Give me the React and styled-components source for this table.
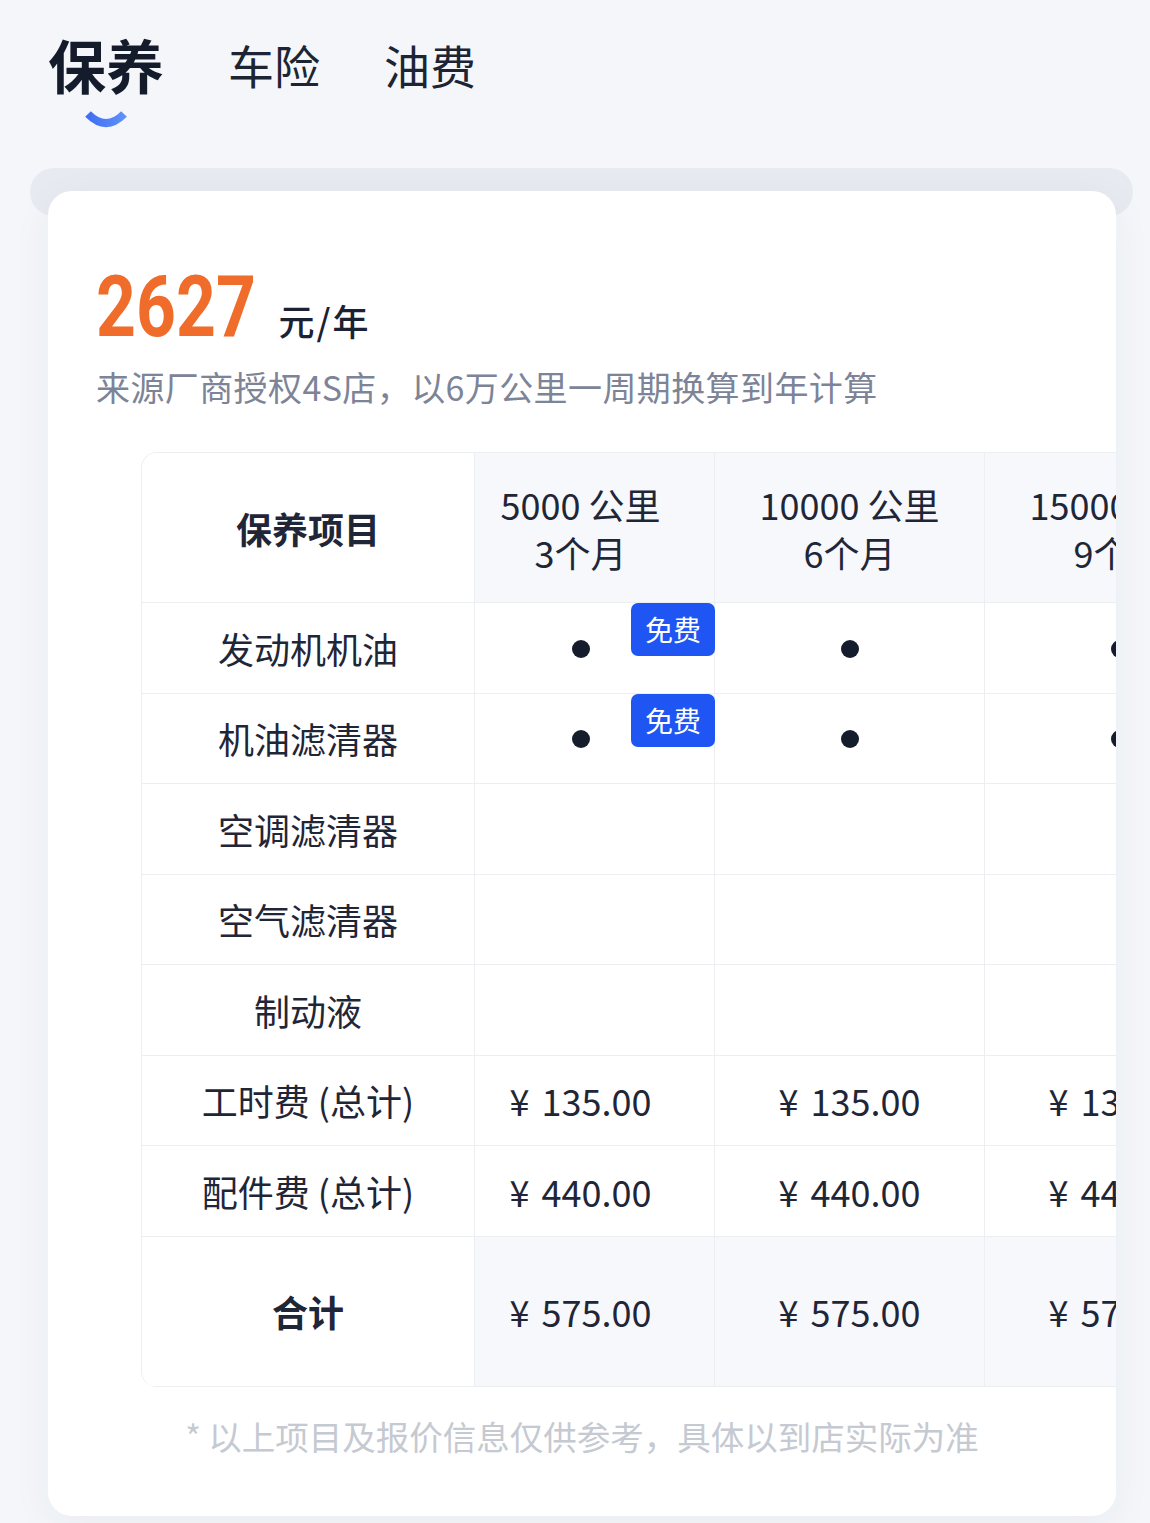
// Section : Maintenance cost card
// Style : tabs on top, yearly price and a schedule table below

import styled, { createGlobalStyle } from "styled-components";

const columns = [
    { km: "5000 公里", months: "3个月", labour: "135.00", parts: "440.00", total: "575.00", first: true },
    { km: "10000 公里", months: "6个月", labour: "135.00", parts: "440.00", total: "575.00" },
    { km: "15000 公里", months: "9个月", labour: "135.00", parts: "440.00", total: "575.00" },
];

// true = item is done at that interval
const items = [
    { name: "发动机机油", marks: [true, true, true], free: true },
    { name: "机油滤清器", marks: [true, true, true], free: true },
    { name: "空调滤清器", marks: [false, false, false] },
    { name: "空气滤清器", marks: [false, false, false] },
    { name: "制动液", marks: [false, false, false] },
];

const Money = ({ value }) => (
    <>
        <Yen>¥</Yen>
        {value}
    </>
);

const App = () => {
    return (
        <>
            <GlobalStyle />
            <Page>
                <TabBar>
                    <Tab $active>
                        <TabLabel $active>保养</TabLabel>
                        <Indicator width="44" height="18" viewBox="0 0 44 18">
                            <defs>
                                <linearGradient id="ind" x1="0" x2="1" y1="0" y2="0">
                                    <stop offset="0" stopColor="#3f6ff2" />
                                    <stop offset="1" stopColor="#5f90fa" />
                                </linearGradient>
                            </defs>
                            <path d="M4 4 Q22 22 40 4" fill="none" stroke="url(#ind)" strokeWidth="8" />
                        </Indicator>
                    </Tab>
                    <Tab>
                        <TabLabel>车险</TabLabel>
                    </Tab>
                    <Tab>
                        <TabLabel>油费</TabLabel>
                    </Tab>
                </TabBar>

                <Ledge />
                <Card>
                    <Summary>
                        <PriceLine>
                            <Price>2627</Price>
                            <Unit>元/年</Unit>
                        </PriceLine>
                        <Source>来源厂商授权4S店，以6万公里一周期换算到年计算</Source>
                    </Summary>

                    <Table>
                        <HeadCell $first>保养项目</HeadCell>
                        {columns.map((c) => (
                            <HeadCell key={c.km} $shade $narrow={c.first}>
                                <span>{c.km}</span>
                                <span>{c.months}</span>
                            </HeadCell>
                        ))}

                        {items.map((it) => (
                            <Row key={it.name} item={it} />
                        ))}

                        <LabelCell>工时费 (总计)</LabelCell>
                        {columns.map((c) => (
                            <ValueCell key={c.km} $narrow={c.first}>
                                <Money value={c.labour} />
                            </ValueCell>
                        ))}
                        <LabelCell>配件费 (总计)</LabelCell>
                        {columns.map((c) => (
                            <ValueCell key={c.km} $narrow={c.first}>
                                <Money value={c.parts} />
                            </ValueCell>
                        ))}

                        <TotalLabel>合计</TotalLabel>
                        {columns.map((c) => (
                            <TotalCell key={c.km} $narrow={c.first}>
                                <Money value={c.total} />
                            </TotalCell>
                        ))}
                    </Table>

                    <Note>* 以上项目及报价信息仅供参考，具体以到店实际为准</Note>
                </Card>
            </Page>
        </>
    );
};
export default App;

const Row = ({ item }) => (
    <>
        <LabelCell>{item.name}</LabelCell>
        {item.marks.map((on, i) => (
            <ValueCell key={i} $narrow={i === 0}>
                {on && <Dot />}
                {item.free && i === 0 && <Badge>免费</Badge>}
            </ValueCell>
        ))}
    </>
);

const GlobalStyle = createGlobalStyle`
    body {
        margin: 0;
        background: #f4f6f9;
        font-family: "Noto Sans CJK SC", "Noto Sans", sans-serif;
        color: #1c2333;
    }
`;

const Page = styled.div`
    width: 1150px;
    height: 1523px;
    overflow: hidden;
    padding-top: 24px;
    box-sizing: border-box;
`;

const TabBar = styled.div`
    display: flex;
    align-items: flex-start;
    gap: 64px;
    padding-left: 48px;
`;

const Tab = styled.div`
    display: flex;
    flex-direction: column;
    align-items: center;
`;

const TabLabel = styled.div`
    height: 80px;
    line-height: 80px;
    font-size: ${(p) => (p.$active ? "58px" : "46px")};
    font-weight: ${(p) => (p.$active ? 700 : 400)};
    color: ${(p) => (p.$active ? "#141b2b" : "#1d2535")};
`;

const Indicator = styled.svg`
    display: block;
    margin-top: 6px;
`;

const Ledge = styled.div`
    height: 48px;
    margin: 40px 17px 0 30px;
    border-radius: 24px;
    background: #e7eaf0;
`;

const Card = styled.div`
    position: relative;
    margin: -25px 34px 0 48px;
    background: #ffffff;
    border-radius: 24px;
    overflow: hidden;
    box-shadow: 0 10px 40px rgba(30, 50, 90, 0.05);
    padding-bottom: 56px;
`;

const Summary = styled.div`
    padding: 73px 0 0 48px;
`;

const PriceLine = styled.div`
    display: flex;
    align-items: baseline;
`;

// narrow DIN-like digits: Roboto squeezed sideways
const Price = styled.span`
    display: inline-block;
    font-family: Roboto, "Liberation Sans", sans-serif;
    font-weight: 700;
    font-size: 86px;
    line-height: 86px;
    color: #ef6c2b;
    transform: scaleX(0.81);
    transform-origin: left center;
    margin-right: -37px;
`;

const Unit = styled.span`
    margin-left: 22px;
    font-size: 36px;
    font-weight: 500;
    letter-spacing: 2px;
    color: #1a2233;
`;

const Source = styled.div`
    margin-top: 13px;
    font-size: 34px;
    letter-spacing: 0.4px;
    line-height: 48px;
    color: #7d8497;
`;

const Table = styled.div`
    display: grid;
    grid-template-columns: 333px 240px 270px 270px;
    grid-template-rows: 150px repeat(7, 90.5px) 150px;
    width: max-content;
    margin: 41px 0 0 93px;
    border-top: 1px solid #eceef2;
    border-left: 1px solid #eceef2;
    border-radius: 16px 0 0 16px;
    overflow: hidden;
`;

const Cell = styled.div`
    position: relative;
    display: flex;
    align-items: center;
    justify-content: center;
    box-sizing: border-box;
    border-right: 1px solid #eceef2;
    border-bottom: 1px solid #eceef2;
    padding-right: ${(p) => (p.$narrow ? "28px" : "0")};
    font-size: 36px;
    color: #1f2637;
`;

const HeadCell = styled(Cell)`
    flex-direction: column;
    line-height: 48px;
    font-weight: ${(p) => (p.$first ? 700 : 400)};
    background: ${(p) => (p.$shade ? "#f6f8fb" : "#ffffff")};
`;

const LabelCell = styled(Cell)``;

const ValueCell = styled(Cell)``;

const TotalLabel = styled(Cell)`
    font-weight: 700;
`;

const TotalCell = styled(Cell)`
    background: #f6f8fb;
`;

const Yen = styled.span`
    margin-right: 12px;
`;

const Dot = styled.span`
    width: 18px;
    height: 18px;
    border-radius: 50%;
    background: #151c2b;
    margin-top: 2px;
`;

const Badge = styled.span`
    position: absolute;
    top: 0;
    right: -1px;
    width: 84px;
    height: 53px;
    border-radius: 7px;
    background: #1e55f3;
    color: #ffffff;
    font-size: 28px;
    line-height: 53px;
    text-align: center;
`;

const Note = styled.div`
    margin-top: 25px;
    text-align: center;
    font-size: 33.5px;
    line-height: 48px;
    color: #c5c9d1;
`;
